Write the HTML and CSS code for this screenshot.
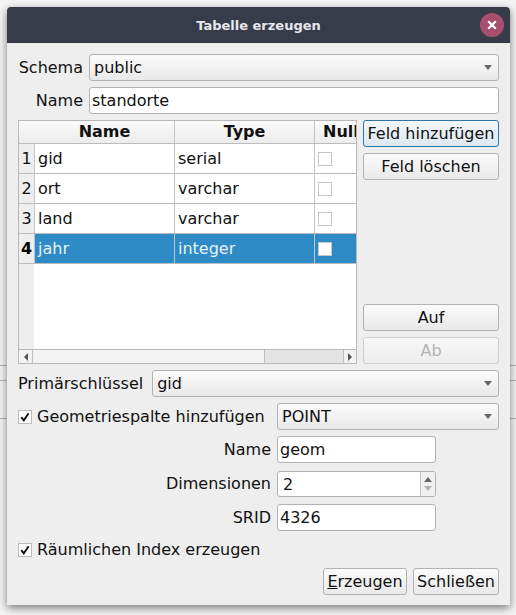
FILE: index.html
```html
<!DOCTYPE html>
<html lang="de">
<head>
<meta charset="utf-8">
<title>Tabelle erzeugen</title>
<link rel="stylesheet" href="styles.css">
</head>
<body>
<div class="window">
  <header class="titlebar">
    <span class="title">Tabelle erzeugen</span>
    <span class="close"><svg width="10" height="10" viewBox="0 0 10 10"><path d="M1.2 1.2 8.8 8.8M8.8 1.2 1.2 8.8" stroke="#fff" stroke-width="2.2" fill="none"/></svg></span>
  </header>
  <main class="content">
    <div class="form-top">
      <label class="lbl">Schema</label>
      <div class="combo"><span class="combo-text">public</span><i class="arrow"></i></div>
      <label class="lbl">Name</label>
      <div class="input">standorte</div>
    </div>

    <div class="table-area">
      <div class="table">
        <div class="thead">
          <div class="corner"></div>
          <div class="th">Name</div>
          <div class="th">Type</div>
          <div class="th th-null">Null</div>
        </div>
        <div class="tr">
          <div class="rh">1</div><div class="td">gid</div><div class="td">serial</div><div class="td td-check"><i class="cell-box"></i></div>
        </div>
        <div class="tr">
          <div class="rh">2</div><div class="td">ort</div><div class="td">varchar</div><div class="td td-check"><i class="cell-box"></i></div>
        </div>
        <div class="tr">
          <div class="rh">3</div><div class="td">land</div><div class="td">varchar</div><div class="td td-check"><i class="cell-box"></i></div>
        </div>
        <div class="tr selected">
          <div class="rh">4</div><div class="td">jahr</div><div class="td">integer</div><div class="td td-check"><i class="cell-box"></i></div>
        </div>
        <div class="tfill"><div class="rh-fill"></div></div>
        <div class="hscroll">
          <div class="sb-btn"><i class="tri-left"></i></div>
          <div class="sb-handle"></div>
          <div class="sb-groove"></div>
          <div class="sb-btn sb-btn-right"><i class="tri-right"></i></div>
        </div>
      </div>
      <div class="side">
        <button class="btn focused">Feld hinzufügen</button>
        <button class="btn">Feld löschen</button>
        <div class="side-gap"></div>
        <button class="btn">Auf</button>
        <button class="btn disabled">Ab</button>
      </div>
    </div>

    <div class="row-pk">
      <label class="lbl">Primärschlüssel</label>
      <div class="combo grow"><span class="combo-text">gid</span><i class="arrow"></i></div>
    </div>

    <div class="row-geom">
      <div class="check-label"><i class="check"><svg width="10" height="10" viewBox="0 0 10 10"><path d="M1.3 5.2 3.8 8.4 8.6 1.2" stroke="#111" stroke-width="1.9" fill="none"/></svg></i>Geometriespalte hinzufügen</div>
      <div class="combo geom-combo"><span class="combo-text combo-tight">POINT</span><i class="arrow"></i></div>
    </div>

    <div class="geom-form">
      <label class="lbl">Name</label>
      <div class="input">geom</div>
      <label class="lbl">Dimensionen</label>
      <div class="spin">
        <span class="spin-text">2</span>
        <span class="spin-btns"><i class="spin-up"></i><i class="spin-down"></i></span>
      </div>
      <label class="lbl">SRID</label>
      <div class="input">4326</div>
    </div>

    <div class="row-index">
      <div class="check-label"><i class="check"><svg width="10" height="10" viewBox="0 0 10 10"><path d="M1.3 5.2 3.8 8.4 8.6 1.2" stroke="#111" stroke-width="1.9" fill="none"/></svg></i>Räumlichen Index erzeugen</div>
    </div>

    <div class="actions">
      <button class="btn btn-create"><u>E</u>rzeugen</button>
      <button class="btn btn-close">Schließen</button>
    </div>
  </main>
</div>
</body>
</html>
```

FILE: styles.css
```css
* {
  box-sizing: border-box;
}

html,
body {
  height: 100%;
}

body {
  margin: 0;
  overflow: hidden;
  font-family: "DejaVu Sans", sans-serif;
  font-size: 16px;
  color: #111;
  background:
    linear-gradient(#b4b4b4, #b4b4b4) 0 365px / 100% 1px no-repeat,
    linear-gradient(#b4b4b4, #b4b4b4) 0 380px / 100% 1px no-repeat,
    linear-gradient(#b4b4b4, #b4b4b4) 0 418px / 100% 1px no-repeat,
    #f4f4f4;
}

.window {
  position: absolute;
  left: 7px;
  top: 7px;
  width: 503px;
  height: 598px;
  display: flex;
  flex-direction: column;
  background: #eeeeee;
  border-radius: 4px 4px 0 0;
  box-shadow: 0 3px 9px rgba(0, 0, 0, 0.5);
}

.titlebar {
  position: relative;
  flex: none;
  height: 36px;
  display: flex;
  align-items: center;
  justify-content: center;
  background: #383c4a;
  border-radius: 4px 4px 0 0;
  color: #e6e8ee;
  font-size: 13px;
  font-weight: 700;
}

.close {
  position: absolute;
  left: 473px;
  top: 6px;
  width: 24px;
  height: 24px;
  display: flex;
  align-items: center;
  justify-content: center;
  border-radius: 50%;
  background: #a84f70;
}

.close svg {
  display: block;
}

.content {
  flex: 1;
  display: flex;
  flex-direction: column;
  padding: 11px;
}

.lbl {
  text-align: right;
  white-space: nowrap;
}

.form-top {
  display: grid;
  grid-template-columns: 65px 1fr;
  column-gap: 6px;
  row-gap: 6px;
  align-items: center;
}

.combo,
.input,
.spin {
  height: 27px;
  border: 1px solid #b2b2b2;
  border-radius: 3px;
  display: flex;
  align-items: center;
}

.combo {
  position: relative;
  background: linear-gradient(#fbfbfb, #e9e9e9);
  padding-left: 4px;
}

.combo-text {
  flex: 1;
}

.combo-tight {
  margin-left: 0;
}

.arrow {
  flex: none;
  width: 0;
  height: 0;
  margin: 0 6px 0 0;
  border-left: 4px solid transparent;
  border-right: 4px solid transparent;
  border-top: 5px solid #666;
}

.input {
  background: #fff;
  padding-left: 2px;
}

.table-area {
  display: flex;
  gap: 6px;
  height: 244px;
  margin-top: 6px;
}

.table {
  flex: none;
  width: 339px;
  height: 244px;
  border: 1px solid #b8b8b8;
  background: #fff;
  display: flex;
  flex-direction: column;
  overflow: hidden;
}

.thead,
.tr {
  display: grid;
  grid-template-columns: 16px 140px 140px 41px;
  flex: none;
}

.thead {
  height: 23px;
  background: linear-gradient(#fafafa, #ececec);
  border-bottom: 1px solid #bcbcbc;
}

.th {
  font-weight: 700;
  text-align: center;
  line-height: 21px;
  border-right: 1px solid #c4c4c4;
  white-space: nowrap;
  overflow: hidden;
}

.th-null {
  border-right: 0;
  text-align: left;
  padding-left: 8px;
}

.tr {
  height: 30px;
}

.rh {
  background: #eeeeee;
  border-right: 1px solid #c4c4c4;
  border-bottom: 1px solid #bcbcbc;
  text-align: center;
  line-height: 29px;
}

.td {
  border-right: 1px solid #c4c4c4;
  border-bottom: 1px solid #bcbcbc;
  padding-left: 3px;
  line-height: 29px;
}

.td-check {
  border-right: 0;
  padding-left: 3px;
  display: flex;
  align-items: center;
}

.cell-box {
  display: block;
  width: 14px;
  height: 14px;
  background: #fff;
  border: 1px solid #c6c6c6;
}

.selected .td {
  background: #2e8bc6;
  color: #e8f1f7;
}

.selected .rh {
  font-weight: 700;
  color: #000;
}

.tfill {
  flex: 1;
  display: flex;
}

.rh-fill {
  width: 15px;
  background: #eeeeee;
}

.hscroll {
  flex: none;
  height: 14px;
  display: flex;
  border-top: 1px solid #b8b8b8;
  background: #e4e4e4;
}

.sb-btn {
  flex: none;
  width: 14px;
  background: #f2f2f2;
  border-right: 1px solid #c0c0c0;
  display: flex;
  align-items: center;
  justify-content: center;
}

.sb-btn-right {
  width: 13px;
  border-right: 0;
  border-left: 1px solid #c0c0c0;
}

.tri-left,
.tri-right {
  display: block;
  width: 0;
  height: 0;
  border-top: 4px solid transparent;
  border-bottom: 4px solid transparent;
}

.tri-left {
  border-right: 4px solid #555;
}

.tri-right {
  border-left: 4px solid #555;
}

.sb-handle {
  flex: none;
  width: 232px;
  background: #f3f3f3;
  border-right: 1px solid #c0c0c0;
}

.sb-groove {
  flex: 1;
  background: #e4e4e4;
}

.side {
  flex: none;
  width: 136px;
  display: flex;
  flex-direction: column;
  gap: 6px;
}

.side-gap {
  flex: 1;
}

.btn {
  flex: none;
  height: 27px;
  padding: 0;
  font: inherit;
  color: #111;
  text-align: center;
  background: linear-gradient(#fbfbfb, #e9e9e9);
  border: 1px solid #b2b2b2;
  border-radius: 3px;
}

.btn.focused {
  border-color: #2a78a8;
  background: linear-gradient(#f3f7fa, #dce8f1);
}

.btn.disabled {
  color: #b4b4b4;
  border-color: #cfcfcf;
  background: linear-gradient(#f8f8f8, #ececec);
}

.row-pk {
  display: flex;
  align-items: center;
  gap: 9px;
  margin-top: 6px;
}

.grow {
  flex: 1;
}

.row-geom {
  display: flex;
  align-items: center;
  justify-content: space-between;
  margin-top: 6px;
}

.geom-combo {
  flex: none;
  width: 222px;
}

.check-label {
  display: flex;
  align-items: center;
  gap: 5px;
  white-space: nowrap;
}

.check {
  display: flex;
  align-items: center;
  justify-content: center;
  width: 14px;
  height: 14px;
  background: #fff;
  border: 1px solid #bcbcbc;
}

.geom-form {
  display: grid;
  grid-template-columns: 253px 159px;
  column-gap: 6px;
  row-gap: 7px;
  align-items: center;
  margin-top: 6px;
}

.spin {
  height: 26px;
  background: #fff;
  padding-left: 5px;
  margin-top: 1px;
}

.spin-text {
  flex: 1;
}

.spin-btns {
  flex: none;
  width: 15px;
  height: 100%;
  display: flex;
  flex-direction: column;
  align-items: center;
  justify-content: center;
  gap: 4px;
  background: #f0f0f0;
  border-left: 1px solid #c6c6c6;
  border-radius: 0 3px 3px 0;
}

.spin-up,
.spin-down {
  display: block;
  width: 0;
  height: 0;
  border-left: 4px solid transparent;
  border-right: 4px solid transparent;
}

.spin-up {
  border-bottom: 5px solid #666;
}

.spin-down {
  border-top: 5px solid #b0b0b0;
}

.row-index {
  height: 25px;
  margin-top: 6px;
  display: flex;
  align-items: center;
}

.actions {
  display: flex;
  justify-content: flex-end;
  gap: 6px;
  margin-top: 6px;
}

.btn-create {
  width: 84px;
}

.btn-close {
  width: 86px;
}
```
